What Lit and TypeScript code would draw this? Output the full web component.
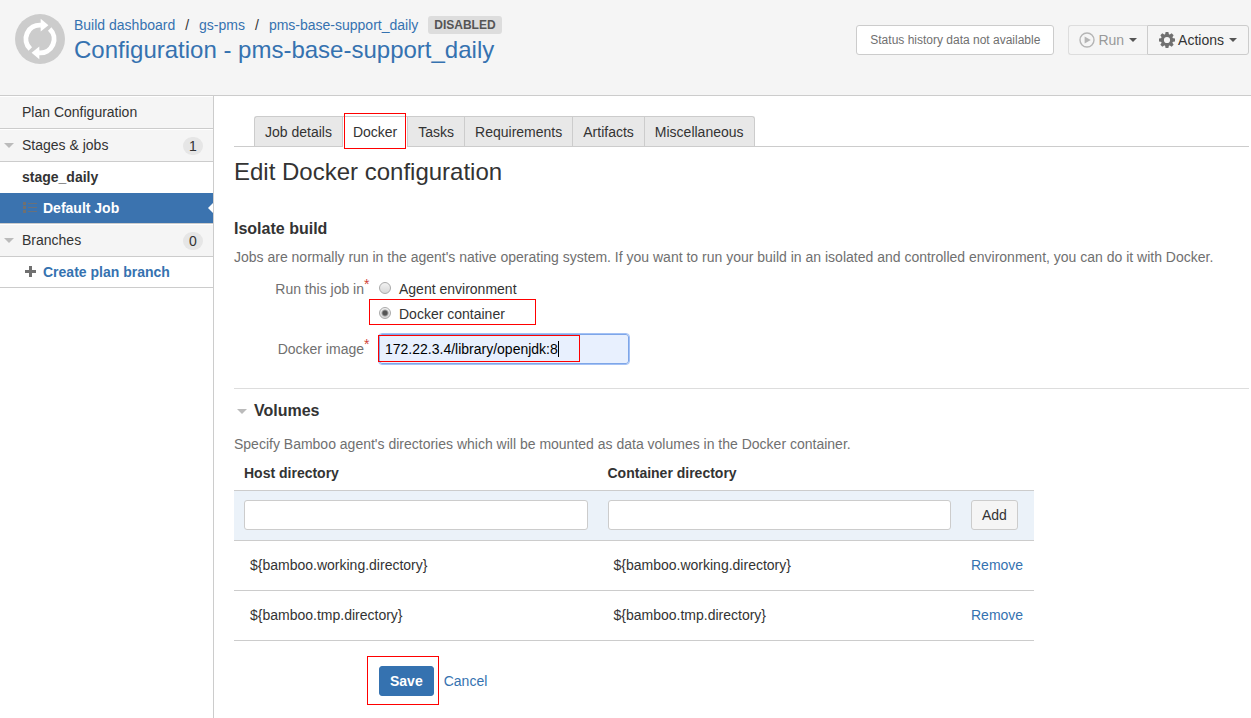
import { LitElement, html, svg, css } from "lit";
import { customElement, state } from "lit/decorators.js";

interface Volume {
  host: string;
  container: string;
}

const gearTeeth = [0, 45, 90, 135, 180, 225, 270, 315];

@customElement("app-root")
export class AppRoot extends LitElement {
  @state() private environment = "docker";

  @state() private volumes: Volume[] = [
    { host: "${bamboo.working.directory}", container: "${bamboo.working.directory}" },
    { host: "${bamboo.tmp.directory}", container: "${bamboo.tmp.directory}" },
  ];

  static styles = css`
    :host {
      display: flex;
      flex-direction: column;
      min-height: 100vh;
      box-sizing: border-box;
      background: #fff;
      color: #333;
      font: 14px/20px "Liberation Sans", Arial, sans-serif;
    }
    *, *::before, *::after { box-sizing: border-box; }
    a { color: #3572b0; text-decoration: none; }
    h1, h2, h3, p, ul, ol { margin: 0; padding: 0; }
    ul, ol { list-style: none; }
    button, input { font: inherit; color: inherit; }
    svg { display: block; flex: none; }

    .header {
      display: flex;
      align-items: flex-start;
      gap: 9px;
      padding: 14px 2px 30px 15px;
      background: #f5f5f5;
      border-bottom: 1px solid #ccc;
    }
    .heading { flex: 1; min-width: 0; padding-top: 1px; }
    .crumbs-row { display: flex; align-items: center; gap: 10px; }
    .crumbs { display: flex; }
    .crumbs li + li::before {
      content: "/";
      color: #333;
      padding: 0 10px;
    }
    .lozenge {
      padding: 1px 6px 0;
      border-radius: 3px;
      background: #ddd;
      color: #555;
      font-size: 12px;
      font-weight: bold;
      line-height: 17px;
    }
    .title { font-size: 24px; font-weight: normal; line-height: 30px; }
    .toolbar { display: flex; gap: 14px; padding-top: 11px; }
    .status {
      padding: 0 13px;
      border: 1px solid #ccc;
      border-radius: 3px;
      background: #fff;
      color: #707070;
      font-size: 12px;
      line-height: 28px;
    }
    .group { display: flex; }
    .button {
      display: flex;
      align-items: center;
      height: 30px;
      padding: 0 10px;
      border: 1px solid #ccc;
      border-radius: 3px;
      background: #f5f5f5;
      white-space: nowrap;
    }
    .button svg { margin-right: 3px; }
    .caret-down {
      width: 8px;
      margin-left: 5px;
      border: 4px solid transparent;
      border-top-color: #555;
      border-bottom: 0;
    }
    .run {
      border-color: #ddd;
      border-right: 0;
      border-radius: 3px 0 0 3px;
      color: #999;
    }
    .actions { padding: 0 11px; border-radius: 0 3px 3px 0; }

    .body { display: flex; flex: 1; }
    .sidebar { flex: 0 0 214px; border-right: 1px solid #ccc; }
    .nav-row {
      display: flex;
      align-items: center;
      height: 33px;
      padding: 0 10px 2px 4px;
      border-top: 1px solid #fff;
      border-bottom: 1px solid #ccc;
      background: #f5f5f5;
      color: #333;
    }
    .marker {
      flex: 0 0 18px;
      display: flex;
      padding-top: 2px;
    }
    .marker::before {
      content: "";
      border: 5px solid transparent;
      border-top-color: #bbb;
      border-bottom: 0;
    }
    .marker.blank::before { border-color: transparent; }
    .count {
      margin: 2px 0 0 auto;
      width: 20px;
      border-radius: 9px;
      background: #e6e6e6;
      text-align: center;
      line-height: 18px;
    }
    .stage { padding: 5px 22px 6px; font-weight: bold; }
    .job, .create {
      display: flex;
      align-items: center;
      gap: 5px;
      height: 31px;
      padding-left: 22px;
      border-bottom: 1px solid #ccc;
      font-weight: bold;
    }
    .job {
      position: relative;
      background: #3b73af;
      color: #fff;
    }
    .job::after {
      content: "";
      position: absolute;
      right: 0;
      top: 10px;
      border: 5px solid transparent;
      border-right-color: #fff;
      border-left: 0;
    }

    .main { flex: 1; min-width: 0; padding: 20px 2px 0 20px; }
    .tabs {
      display: flex;
      padding-left: 20px;
      border-bottom: 1px solid #ccc;
    }
    .tab {
      display: block;
      position: relative;
      height: 30px;
      padding: 5px 10px 4px;
      border: solid #ccc;
      border-width: 1px 0 0 1px;
      background: #e8e8e8;
      color: #333;
    }
    .tabs li:first-child .tab { border-top-left-radius: 3px; }
    .tabs li:last-child .tab { border-right-width: 1px; border-top-right-radius: 3px; }
    .tab.current {
      height: 31px;
      margin-bottom: -1px;
      background: #fff;
    }
    .marked { position: relative; }
    .marked::after {
      content: "";
      position: absolute;
      inset: 0;
      border: 1px solid #f00;
      pointer-events: none;
    }
    .tab.marked::after { inset: -4px 1px -2px; }

    h2 { margin-top: 10px; font-size: 24px; font-weight: normal; line-height: 30px; }
    h3 { font-size: 16px; line-height: 20px; }
    .isolate { margin-top: 32px; }
    .description { margin-top: 8px; color: #707070; }
    .field {
      display: grid;
      grid-template-columns: 135px minmax(0, 1fr);
      column-gap: 10px;
      margin: 12px 0 0;
      padding: 0;
      border: 0;
    }
    .label { text-align: right; color: #707070; }
    .required {
      display: inline-block;
      width: 5px;
      color: #d04437;
      line-height: 10px;
      vertical-align: 5px;
    }
    .choices { display: grid; row-gap: 5px; justify-items: start; }
    .choice { display: flex; align-items: center; gap: 8px; }
    .choice.marked { padding-right: 31px; }
    .choice.marked::after { inset: -5px 0 -1px -10px; }
    .radio {
      appearance: none;
      width: 12px;
      height: 12px;
      margin: 0 0 2px;
      border: 1px solid #aaa;
      border-radius: 50%;
      background: linear-gradient(#f2f2f2, #d8d8d8);
    }
    .radio:checked {
      background:
        radial-gradient(circle, #555 0 2px, transparent 4px),
        linear-gradient(#f2f2f2, #d8d8d8);
    }
    .image-row { align-items: center; margin-top: 10px; }
    .image-box { width: 250px; max-width: 100%; }
    .image-box.marked::after { inset: 1px 49px 2px -1px; }
    .text {
      display: block;
      width: 100%;
      height: 30px;
      padding: 4px 5px;
      border: 1px solid #ccc;
      border-radius: 3px;
      background: #fff;
    }
    .image {
      border-color: #7ea6e8;
      outline: 1px solid #a3c1f5;
      background: #e8f0fe;
      color: #000;
    }
    .cursor {
      position: absolute;
      left: 179px;
      top: 7px;
      width: 1px;
      height: 16px;
      background: #000;
    }

    .volumes { margin-top: 24px; padding-top: 12px; border-top: 1px solid #ddd; }
    .toggle { display: flex; align-items: center; }
    .toggle::before {
      content: "";
      margin: 0 7px 0 3px;
      border: 5px solid transparent;
      border-top-color: #bbb;
      border-bottom: 0;
    }
    .volumes .description { margin-top: 13px; }
    .table {
      width: 100%;
      max-width: 800px;
      table-layout: fixed;
      border-collapse: separate;
      border-spacing: 0;
    }
    .table .end { width: 73px; }
    .table th { padding: 9px 10px 7px; text-align: left; }
    .table td, .table th { border-bottom: 1px solid #ccc; }
    .table td { height: 50px; padding: 0 16px 1px; }
    .table td:last-child { padding: 0 10px 1px; }
    .table .adding td { padding: 0 10px 1px; background: #ebf2f9; }
    .footer {
      display: flex;
      align-items: center;
      gap: 10px;
      margin-top: 25px;
      padding-left: 145px;
    }
    .save-box.marked::after { inset: -10px -5px -9px -12px; }
    .save {
      height: 30px;
      padding: 0 10px;
      border: 1px solid #3572b0;
      border-radius: 3px;
      background: #3572b0;
      color: #fff;
      font-weight: bold;
    }
  `;

  private remove(event: Event, volume: Volume) {
    event.preventDefault();
    this.volumes = this.volumes.filter((item) => item !== volume);
  }

  private renderHeader() {
    return html`
      <header class="header">
        <svg width="50" height="50" viewBox="0 0 50 50" aria-hidden="true">
          <circle cx="25" cy="25" r="25" fill="#ccc" />
          <g fill="none" stroke="#fff" stroke-width="5">
            <path d="M15.3 35A13.800 13.800 0 0 1 26 11.200" />
            <path d="M34.7 15A13.800 13.800 0 0 1 24 38.800" />
          </g>
          <path d="M25.700 4.800L33.400 11.300L25.700 17.600Z" fill="#fff" />
          <path d="M24.300 45.200L16.600 38.700L24.300 32.400Z" fill="#fff" />
        </svg>
        <div class="heading">
          <div class="crumbs-row">
            <ol class="crumbs">
              <li><a href="#dashboard">Build dashboard</a></li>
              <li><a href="#project">gs-pms</a></li>
              <li><a href="#plan">pms-base-support_daily</a></li>
            </ol>
            <span class="lozenge">DISABLED</span>
          </div>
          <h1 class="title"><a href="#config">Configuration - pms-base-support_daily</a></h1>
        </div>
        <div class="toolbar">
          <div class="status">Status history data not available</div>
          <div class="group">
            <button class="button run" type="button" disabled>
              <svg width="16" height="16" viewBox="0 0 16 16" aria-hidden="true">
                <circle cx="8" cy="8" r="7" fill="none" stroke="#b5b5b5" stroke-width="1.4" />
                <path d="M5.6 4.4L11.8 8L5.6 11.6Z" fill="#b5b5b5" />
              </svg>
              Run<span class="caret-down"></span>
            </button>
            <button class="button actions" type="button">
              <svg width="16" height="16" viewBox="0 0 16 16" aria-hidden="true">
                ${gearTeeth.map(
                  (angle) => svg`<path d="M6 3L6.600 0H9.400L10 3Z" fill="#707070" transform="rotate(${angle} 8 8)" />`
                )}
                <circle cx="8" cy="8" r="4.600" fill="none" stroke="#707070" stroke-width="3" />
              </svg>
              Actions<span class="caret-down"></span>
            </button>
          </div>
        </div>
      </header>
    `;
  }

  private renderSidebar() {
    return html`
      <nav class="sidebar" aria-label="Plan">
        <a class="nav-row" href="#plan-config"><span class="marker blank"></span>Plan Configuration</a>
        <div class="nav-row"><span class="marker"></span>Stages &amp; jobs<span class="count">1</span></div>
        <div class="stage">stage_daily</div>
        <a class="job" href="#job">
          <svg width="16" height="16" viewBox="0 0 16 16" aria-hidden="true">
            <path d="M1 2h3v3H1zM1 6h3v3H1zM1 10h3v3H1z" fill="#707070" />
            <path d="M6 3.500h9M6 7.500h9M6 11.500h9" stroke="#6a7079" />
          </svg>
          Default Job
        </a>
        <div class="nav-row"><span class="marker"></span>Branches<span class="count">0</span></div>
        <a class="create" href="#create">
          <svg width="16" height="16" viewBox="0 0 16 16" aria-hidden="true">
            <path d="M8.500 2v11M3 7.500h11" stroke="#707070" stroke-width="3" />
          </svg>
          Create plan branch
        </a>
      </nav>
    `;
  }

  private renderTabs() {
    const tabs = ["Job details", "Docker", "Tasks", "Requirements", "Artifacts", "Miscellaneous"];
    return html`
      <ul class="tabs">
        ${tabs.map(
          (name) => html`<li>
            <a class=${name === "Docker" ? "tab current marked" : "tab"} href="#tab">${name}</a>
          </li>`
        )}
      </ul>
    `;
  }

  private renderChoice(value: string, label: string) {
    const checked = this.environment === value;
    return html`
      <label class=${value === "docker" ? "choice marked" : "choice"}>
        <input
          class="radio"
          type="radio"
          name="environment"
          value=${value}
          .checked=${checked}
          @change=${() => (this.environment = value)}
        />${label}
      </label>
    `;
  }

  private renderVolumes() {
    return html`
      <section class="volumes">
        <h3 class="toggle">Volumes</h3>
        <p class="description">
          Specify Bamboo agent's directories which will be mounted as data volumes in the Docker container.
        </p>
        <table class="table">
          <thead>
            <tr>
              <th id="host">Host directory</th>
              <th id="container">Container directory</th>
              <th class="end"></th>
            </tr>
          </thead>
          <tbody>
            <tr class="adding">
              <td><input class="text" type="text" aria-labelledby="host" /></td>
              <td><input class="text" type="text" aria-labelledby="container" /></td>
              <td><button class="button" type="button">Add</button></td>
            </tr>
            ${this.volumes.map(
              (volume) => html`<tr>
                <td>${volume.host}</td>
                <td>${volume.container}</td>
                <td><a href="#remove" @click=${(e: Event) => this.remove(e, volume)}>Remove</a></td>
              </tr>`
            )}
          </tbody>
        </table>
      </section>
    `;
  }

  render() {
    return html`
      ${this.renderHeader()}
      <div class="body">
        ${this.renderSidebar()}
        <main class="main">
          ${this.renderTabs()}
          <h2>Edit Docker configuration</h2>
          <form @submit=${(e: Event) => e.preventDefault()}>
            <h3 class="isolate">Isolate build</h3>
            <p class="description">
              Jobs are normally run in the agent's native operating system. If you want to run your build in an
              isolated and controlled environment, you can do it with Docker.
            </p>
            <div class="field" role="radiogroup" aria-labelledby="run-in">
              <span class="label" id="run-in">Run this job in<span class="required">*</span></span>
              <div class="choices">
                ${this.renderChoice("agent", "Agent environment")}
                ${this.renderChoice("docker", "Docker container")}
              </div>
            </div>
            <div class="field image-row">
              <label class="label" for="image">Docker image<span class="required">*</span></label>
              <div class="image-box marked">
                <input class="text image" id="image" type="text" value="172.22.3.4/library/openjdk:8" />
                <span class="cursor"></span>
              </div>
            </div>
            ${this.renderVolumes()}
            <div class="footer">
              <span class="save-box marked"><button class="save" type="submit">Save</button></span>
              <a href="#cancel">Cancel</a>
            </div>
          </form>
        </main>
      </div>
    `;
  }
}
